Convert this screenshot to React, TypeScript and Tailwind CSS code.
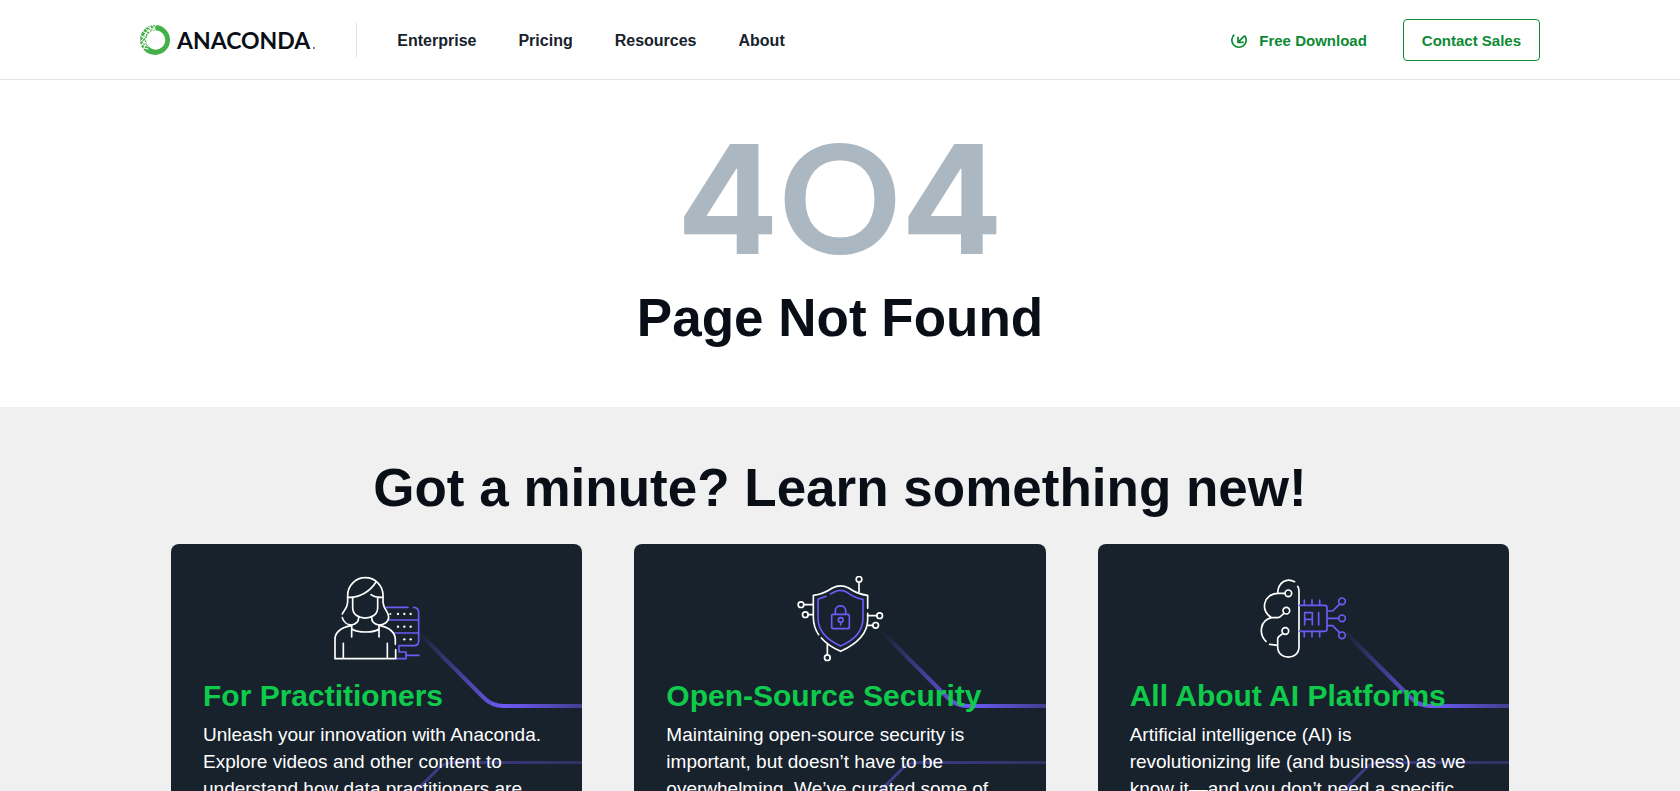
import type { ReactNode } from "react";

const NAV_ITEMS = ["Enterprise", "Pricing", "Resources", "About"];

function LogoMark() {
  return (
    <svg className="size-[30px] shrink-0" viewBox="0 0 90 90" aria-hidden="true">
      <path
        fillRule="evenodd"
        fill="#43b049"
        d="M45 0a45 45 0 1 0 0 90a45 45 0 1 0 0-90zM47 16a29 29 0 1 1 0 58a29 29 0 1 1 0-58z"
      />
      <g stroke="#fff" strokeWidth="3" fill="none" strokeLinecap="round">
        <path d="M47 1L36 20M36 0L46 13M30 3L33 18M24 7L38 12M18 12L30 22M28 12L15 27M10 20L25 28M20 24L6 38M3 32L20 42M16 34L2 50M2 45L19 54M16 44L4 62M5 58L24 64M18 56L10 72M12 69L24 72" />
      </g>
      <g fill="#fff">
        <circle cx="41" cy="13" r="3" />
        <circle cx="28" cy="18" r="3" />
        <circle cx="16" cy="31" r="3" />
        <circle cx="13" cy="53" r="3" />
      </g>
    </svg>
  );
}

function DownloadIcon() {
  return (
    <svg className="size-4" viewBox="0 0 48 48" fill="none" stroke="currentColor" strokeWidth="5" aria-hidden="true">
      <path d="M10 5A21.500 21.500 0 1 0 41 8" />
      <path d="M41 8L21 28M21 11V28H38" />
    </svg>
  );
}

function PractitionerIcon() {
  return (
    <svg className="mx-auto h-[86px] w-24" viewBox="26 33 288 258" fill="none" strokeWidth="5" strokeLinecap="round" strokeLinejoin="round" aria-hidden="true">
      <g stroke="#6d5bf6">
        <path d="M198 127H263M280 127Q295 128 295 142V228Q295 242 281 242H236V261H257V281H228M257 271H296M206 165H294M220 204H294" />
      </g>
      <g stroke="#fff">
        <path d="M82 97V91A53 53 0 0 1 188 91V112C190 134 205 140 205 156C205 172 190 180 175 180C162 177 154 170 154 158" />
        <path d="M82 97V112C81 132 69 138 66 147M66 158C70 172 82 180 94 180C106 177 115 170 115 158" />
        <path d="M82 97C120 99 150 78 167 51M152 89Q164 98 188 97M97 99V128C97 170 172 170 172 128V99" />
        <path d="M94 181Q44 191 44 223V281H226V254M225 238V223Q224 191 177 181M94 181V216M176 181V216M95 192C112 204 160 204 176 192M69 235V280M201 235V280" />
      </g>
      <g fill="#fff">
        <circle cx="210" cy="147" r="3" />
        <circle cx="233" cy="147" r="3.500" />
        <circle cx="252" cy="147" r="3.500" />
        <circle cx="271" cy="147" r="3.500" />
        <circle cx="233" cy="185" r="3.500" />
        <circle cx="252" cy="185" r="3.500" />
        <circle cx="271" cy="185" r="3.500" />
        <circle cx="252" cy="223" r="3.500" />
        <circle cx="271" cy="223" r="3.500" />
      </g>
    </svg>
  );
}

function SecurityIcon() {
  return (
    <svg className="mx-auto h-[86px] w-24" viewBox="21 33 288 258" fill="none" strokeWidth="5" strokeLinecap="round" strokeLinejoin="round" aria-hidden="true">
      <g stroke="#fff">
        <path d="M248 130V91Q218 88 191 69Q167 56 142 69Q114 88 85 91V158Q86 188 101 209M109 219Q130 243 167 259Q247 222 248 165V145" />
        <path d="M222 81V52M84 119H57M84 149H69M248 152H276M248 181H263M127 238V269" />
        <circle cx="222" cy="43" r="8.500" />
        <circle cx="48" cy="119" r="8.500" />
        <circle cx="61" cy="149" r="8.500" />
        <circle cx="284" cy="152" r="8.500" />
        <circle cx="272" cy="181" r="8.500" />
        <circle cx="127" cy="278" r="8.500" />
      </g>
      <g stroke="#6d5bf6">
        <path d="M123 94L99 103V160C100 202 130 227 167 243C204 227 234 202 234 160V103Q210 99 186 82Q167 71 148 81L136 87" />
        <rect x="140" y="148" width="53" height="43" rx="5" />
        <path d="M151 148V137C151 118 182 118 182 137V148M167 172V180" />
        <circle cx="167" cy="165" r="7" />
      </g>
    </svg>
  );
}

function BrainIcon() {
  return (
    <svg className="mx-auto h-[86px] w-24" viewBox="30 33 288 258" fill="none" strokeWidth="5" strokeLinecap="round" strokeLinejoin="round" aria-hidden="true">
      <g stroke="#fff">
        <path d="M149 50C124 37 99 52 98 85M119 85H98C58 85 42 137 80 158H97Q104 158 108 153L117 145M80 158C44 166 41 207 63 229M74 238L98 241M158 64Q162 70 162 78V245C162 287 98 287 98 245V222Q98 218 102 214L114 205" />
        <circle cx="130" cy="85" r="10" />
        <circle cx="124" cy="137" r="10" />
        <circle cx="121" cy="198" r="10" />
      </g>
      <g stroke="#6d5bf6">
        <path d="M163 121H239Q246 121 246 128V192Q246 199 239 199H163M178 120V105M201 120V105M224 120V105M178 200V215M201 200V215M224 200V215M247 138H263L283 118M247 160H280M247 182H263L283 202" />
        <path d="M179 179V143H202V179M179 163H202M221 143V179" />
        <circle cx="291" cy="109" r="10" />
        <circle cx="291" cy="160" r="10" />
        <circle cx="291" cy="211" r="10" />
      </g>
    </svg>
  );
}

function CircuitLines({ id }: { id: string }) {
  return (
    <svg className="absolute top-0 right-0 h-[300px] w-[412px]" viewBox="0 0 412 300" fill="none" aria-hidden="true">
      <defs>
        <linearGradient id={`${id}-upper`} gradientUnits="userSpaceOnUse" x1="247" y1="0" x2="412" y2="0">
          <stop offset="0" stopColor="#6d5bf6" stopOpacity="0" />
          <stop offset="0.150" stopColor="#6d5bf6" stopOpacity="0.300" />
          <stop offset="0.520" stopColor="#6d5bf6" />
          <stop offset="1" stopColor="#6d5bf6" stopOpacity="0.500" />
        </linearGradient>
        <linearGradient id={`${id}-lower`} gradientUnits="userSpaceOnUse" x1="240" y1="0" x2="412" y2="0">
          <stop offset="0" stopColor="#6d5bf6" stopOpacity="0.450" />
          <stop offset="1" stopColor="#6d5bf6" stopOpacity="0.280" />
        </linearGradient>
      </defs>
      <path d="M247 87L314 154Q322 162 334 162H412" stroke={`url(#${id}-upper)`} strokeWidth="4" />
      <path d="M212 281L270 223Q275 218.500 284 218.500H412" stroke={`url(#${id}-lower)`} strokeWidth="3" />
    </svg>
  );
}

function TopicCard({ id, icon, title, children }: { id: string; icon: ReactNode; title: string; children: ReactNode }) {
  return (
    <article className="relative overflow-hidden rounded-lg bg-[#17222d] px-8 py-8">
      <CircuitLines id={id} />
      <div className="relative">
        {icon}
        <h3 className="mt-[14px] text-[30px] leading-10 font-bold whitespace-nowrap text-[#0fcb4b]">{title}</h3>
        <p className="mt-[5px] text-[19px] leading-[27px] text-white">{children}</p>
      </div>
    </article>
  );
}

export default function App() {
  return (
    <div className="flex h-screen flex-col overflow-hidden bg-white font-['Liberation_Sans',Arial,sans-serif] text-[#0a0f17]">
      <header className="h-20 shrink-0 border-b border-[#e5e5e5]">
        <div className="mx-auto flex h-full max-w-[1400px] items-center justify-between pt-px">
          <div className="flex items-center gap-[41px]">
            <a href="#" className="flex items-center gap-[7px]">
              <LogoMark />
              <span className="flex items-baseline font-['Lato',sans-serif] text-[23px] leading-[30px] font-bold">
                ANACONDA<span className="ml-[3px] size-0.5 bg-[#7d8186]" />
              </span>
            </a>
            <nav className="flex h-[34px] items-center gap-[42px] border-l border-[#dedede] pl-10">
              {NAV_ITEMS.map((item) => (
                <a key={item} href="#" className="pt-0.5 text-base leading-6 font-bold text-[#17222d]">
                  {item}
                </a>
              ))}
            </nav>
          </div>
          <div className="flex items-center gap-9 text-[15px] leading-6 font-bold text-[#0d8a33]">
            <a href="#" className="flex items-center gap-3 pt-0.5">
              <DownloadIcon />
              Free Download
            </a>
            <a href="#" className="flex h-[42px] items-center rounded border border-[#0d8a33] px-[18px] pt-0.5">
              Contact Sales
            </a>
          </div>
        </div>
      </header>
      <main className="flex grow flex-col">
        <section className="pt-16 pb-[55px] text-center">
          <p className="h-[110px] font-['Inter',sans-serif] text-[151px] leading-[110px] font-bold text-[#abb8c2]" aria-label="404">
            4<span className="font-['Lato',sans-serif] leading-[80px]">O</span>4
          </p>
          <h1 className="mt-[30px] text-[53px] leading-[68px] font-bold">Page Not Found</h1>
        </section>
        <section className="grow bg-[#f0f0f0] pt-[47px]">
          <h2 className="mb-[22px] text-center text-[53px] leading-[68px] font-bold">Got a minute? Learn something new!</h2>
          <div className="mx-auto grid max-w-[1338px] grid-cols-3 gap-13">
            <TopicCard id="practitioners" icon={<PractitionerIcon />} title="For Practitioners">
              Unleash your innovation with Anaconda. Explore videos and other content to understand how data
              practitioners are
            </TopicCard>
            <TopicCard id="security" icon={<SecurityIcon />} title="Open-Source Security">
              Maintaining open-source security is important, but doesn’t have to be overwhelming. We’ve curated some
              of
            </TopicCard>
            <TopicCard id="platforms" icon={<BrainIcon />} title="All About AI Platforms">
              Artificial intelligence (AI) is revolutionizing life (and business) as we know it—and you don’t need a
              specific
            </TopicCard>
          </div>
        </section>
      </main>
    </div>
  );
}
